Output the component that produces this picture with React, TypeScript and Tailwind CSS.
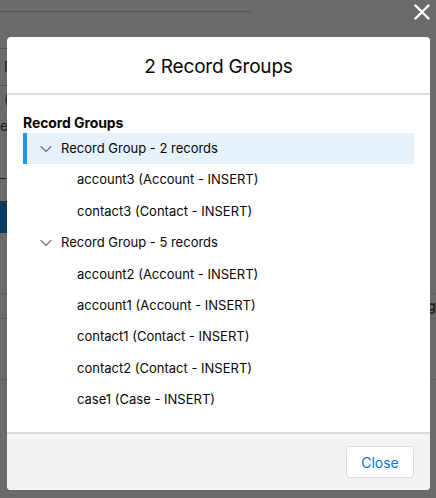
import { ChevronDown } from 'lucide-react';

const groups = [
  {
    label: 'Record Group - 2 records',
    selected: true,
    items: ['account3 (Account - INSERT)', 'contact3 (Contact - INSERT)'],
  },
  {
    label: 'Record Group - 5 records',
    selected: false,
    items: [
      'account2 (Account - INSERT)',
      'account1 (Account - INSERT)',
      'contact1 (Contact - INSERT)',
      'contact2 (Contact - INSERT)',
      'case1 (Case - INSERT)',
    ],
  },
];

export default function App() {
  return (
    <div className="relative w-[436px] h-[498px] overflow-hidden bg-[#6b6b6b] font-['Inter',sans-serif] text-[#080707]">
      {/* page beneath the overlay */}
      <div className="flex flex-col text-[14px] leading-none text-[#222]">
        <div className="h-[12px] w-[252px] border-b border-[#585858]" />
        <div className="h-[36px]" />
        <div className="h-[37px] w-[8px] border-t border-[#2f5a7c] flex items-center pl-[4px]">F</div>
        <div className="h-[30px] w-[8px] border-t border-[#2f5a7c] pt-[6px] pl-[4px]">(</div>
        <div className="h-[40px] pt-[4px]">e</div>
        <div className="h-[46px] flex items-center">
          <div className="w-[6px] h-px bg-[#222]" />
        </div>
        <div className="h-[32px] w-[8px] bg-[#0b3a5e]" />
        <div className="h-[60px]" />
        <div className="h-[25px] border-t border-[#5e5e5e] flex justify-end items-center font-bold">g</div>
        <div className="h-[61px] border-t border-[#5e5e5e]" />
        <div className="border-t border-[#5e5e5e]" />
      </div>

      <div className="absolute inset-0 flex flex-col">
        <div className="h-[37px] flex justify-end items-start pt-[4px] pr-[6px]">
          <svg width="16" height="16" viewBox="0 0 16 16" className="text-white">
            <path d="M1.5 1.5 14.5 14.5M14.5 1.5 1.5 14.5" stroke="currentColor" strokeWidth="2.4" strokeLinecap="round" />
          </svg>
        </div>

        <div className="ml-[7px] mr-[6px] h-[453px] bg-white rounded-[4px] flex flex-col overflow-hidden">
          <div className="h-[58px] flex items-center justify-center border-b-2 border-[#dddbda]">
            <h2 className="text-[19px] leading-none tracking-[-0.2px] pt-[2px]">2 Record Groups</h2>
          </div>

          <div className="flex-1 px-4 pt-[18px]">
            <div className="text-[14px] font-bold leading-[20px] tracking-[-0.1px]">Record Groups</div>
            <div className="flex flex-col">
              {groups.map((g) => (
                <div key={g.label} className="flex flex-col">
                  <div
                    className={`h-[31.4px] flex items-center text-[13px] ${
                      g.selected ? 'bg-[#e5f2fc] border-l-4 border-[#1b96ff]' : 'border-l-4 border-transparent'
                    }`}
                  >
                    <ChevronDown className="ml-[9px] w-[20px] h-[20px] text-[#747474]" strokeWidth={1.3} />
                    <span className="ml-[5px]">{g.label}</span>
                  </div>
                  {g.items.map((it) => (
                    <div key={it} className="h-[31.4px] flex items-center pl-[54px] text-[13px]">
                      {it}
                    </div>
                  ))}
                </div>
              ))}
            </div>
          </div>

          <div className="h-[58px] border-t-2 border-[#dddbda] bg-[#f3f3f3] flex items-center justify-end pr-4">
            <button className="h-[32px] w-[68px] rounded-[4px] border border-[#dddbda] bg-white text-[14px] text-[#0176d3]">
              Close
            </button>
          </div>
        </div>
      </div>
    </div>
  );
}
